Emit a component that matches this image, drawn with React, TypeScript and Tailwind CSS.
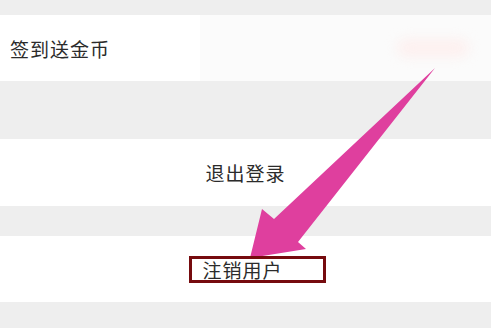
import React from 'react';

const Arrow: React.FC = () => (
  <svg
    className="absolute inset-0 pointer-events-none"
    width="491"
    height="328"
    viewBox="0 0 491 328"
  >
    <polygon
      points="435,68 298,242 306,249 250,258 262,209 274,219"
      fill="#df3f9e"
    />
  </svg>
);

const App: React.FC = () => {
  return (
    <div
      className="relative w-[491px] h-[328px] overflow-hidden bg-[#eeeeee] text-[#2b2b2b]"
      style={{ fontFamily: '"Noto Sans CJK SC", "Noto Sans", sans-serif' }}
    >
      <div className="flex flex-col pt-[15px]">
        {/* check-in row */}
        <div className="flex h-[66px]">
          <div className="w-[200px] bg-white flex items-center pl-[10px]">
            <span className="text-[19px] tracking-[1px] leading-none">签到送金币</span>
          </div>
          <div className="flex-1 bg-[#fbfbfb] flex items-center justify-end pr-[22px]">
            {/* blurred status tag */}
            <div className="w-[72px] h-[18px] rounded-full bg-[#fdf0ef] blur-[6px]" />
          </div>
        </div>

        {/* logout */}
        <div className="mt-[58px] h-[67px] bg-white flex items-center justify-center">
          <span className="text-[19px] tracking-[1px] leading-none">退出登录</span>
        </div>

        {/* delete account */}
        <div className="mt-[30px] h-[66px] bg-white flex items-center justify-center">
          <span className="relative z-10 ml-[24px] h-[27px] flex items-center pl-[10px] pr-[40px] border-[3px] border-[#760b0e]">
            <span className="text-[19px] tracking-[1px] leading-none">注销用户</span>
          </span>
        </div>
      </div>

      <Arrow />
    </div>
  );
};

export default App;
